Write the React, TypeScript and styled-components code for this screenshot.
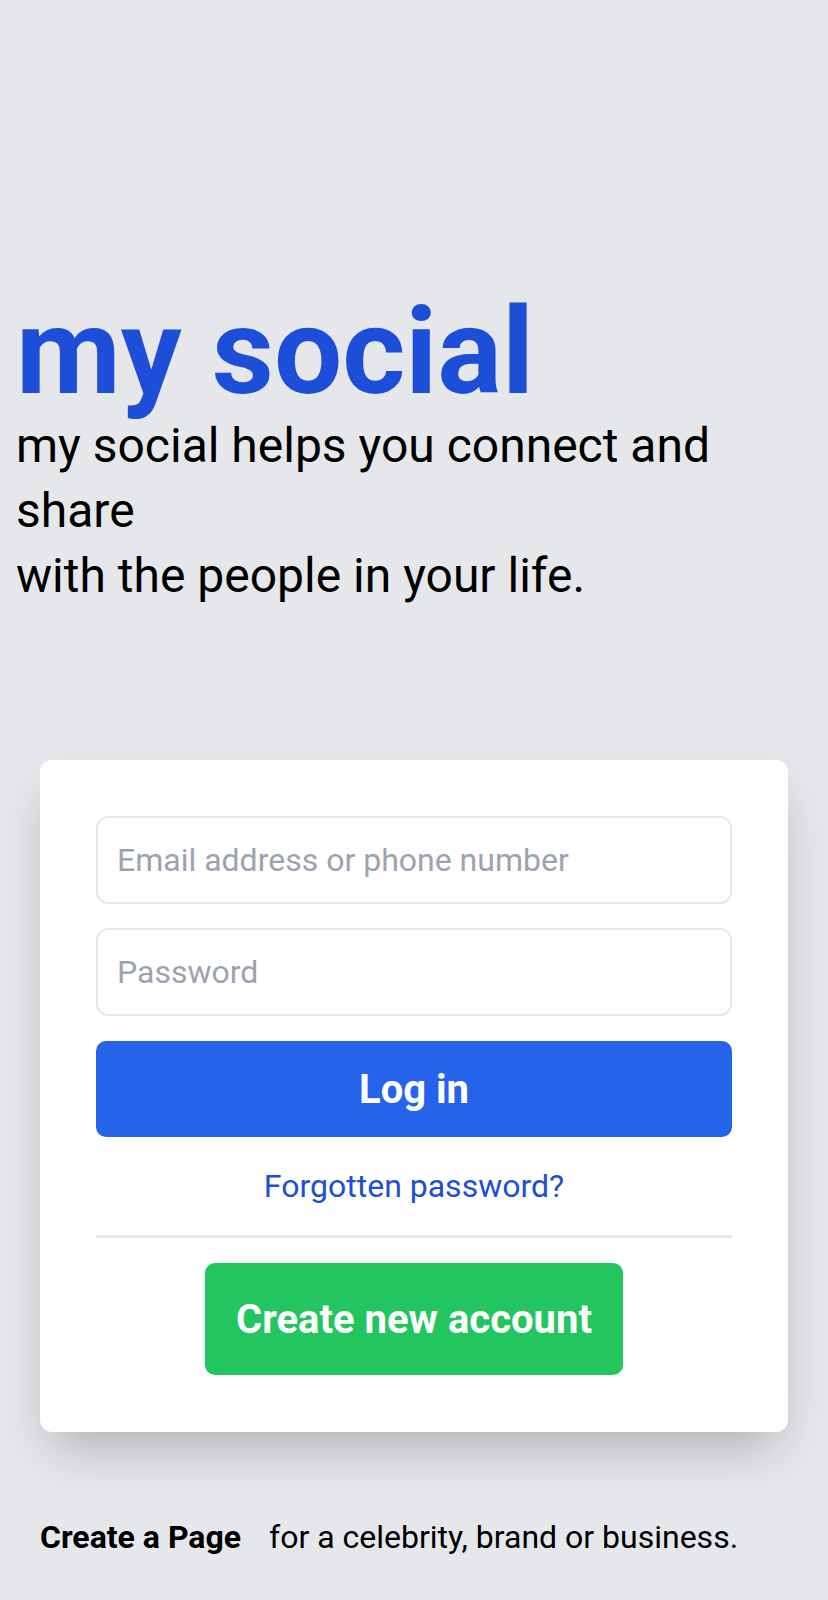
import styled, { createGlobalStyle } from "styled-components";

const GlobalStyle = createGlobalStyle`
  html, body {
    margin: 0;
    padding: 0;
    background: #e5e7eb;
    font-family: Roboto, "Liberation Sans", Arial, sans-serif;
  }
  * {
    box-sizing: border-box;
  }
`;

const Page = styled.main`
  min-height: 1600px;
  padding: 292px 0 0;
  display: flex;
  flex-direction: column;
`;

const Hero = styled.section`
  padding: 0 16px;
`;

const Brand = styled.h1`
  margin: 0;
  font-size: 121px;
  line-height: 1;
  font-weight: 700;
  color: #1d4ed8;
`;

const Tagline = styled.p`
  margin: 0;
  font-size: 48px;
  line-height: 65px;
  font-weight: 400;
  color: #000;
`;

const Card = styled.form`
  margin: 152px 40px 0;
  padding: 56px 56px 57px;
  background: #fff;
  border-radius: 12px;
  box-shadow: 0 25px 50px -12px rgba(0, 0, 0, 0.25);
  display: flex;
  flex-direction: column;
`;

const Field = styled.input`
  height: 88px;
  width: 100%;
  padding: 0 19px;
  border: 2px solid #e5e7eb;
  border-radius: 12px;
  font-family: inherit;
  font-size: 32px;
  color: #111827;
  outline: none;
  & + & {
    margin-top: 24px;
  }
  &::placeholder {
    color: #9ca3af;
  }
`;

const Button = styled.button<{ $variant: "primary" | "success" }>`
  border: none;
  border-radius: 10px;
  font-family: inherit;
  font-size: 40px;
  font-weight: 700;
  color: #fff;
  cursor: pointer;
  background: ${({ $variant }) =>
    $variant === "primary" ? "#2563eb" : "#22c55e"};
`;

const LoginButton = styled(Button)`
  margin-top: 25px;
  height: 96px;
  width: 100%;
`;

const CreateButton = styled(Button)`
  align-self: center;
  height: 112px;
  padding: 0 31px;
`;

const ForgotLink = styled.a`
  margin-top: 30px;
  align-self: center;
  font-size: 32px;
  line-height: 38px;
  color: #1d4ed8;
  text-decoration: none;
`;

const Divider = styled.hr`
  margin: 30px 0 25px;
  border: none;
  height: 3px;
  background: #e5e7eb;
`;

const Footer = styled.p`
  margin: 86px 40px 0;
  font-size: 32px;
  line-height: 38px;
  color: #000;
`;

const Strong = styled.a`
  font-weight: 700;
  color: #000;
  text-decoration: none;
  margin-right: 28px;
`;

export default function App() {
  return (
    <>
      <GlobalStyle />
      <Page>
        <Hero>
          <Brand>my social</Brand>
          <Tagline>
            my social helps you connect and share
            <br />
            with the people in your life.
          </Tagline>
        </Hero>

        <Card onSubmit={(e) => e.preventDefault()}>
          <Field type="text" placeholder="Email address or phone number" />
          <Field type="password" placeholder="Password" />
          <LoginButton $variant="primary" type="submit">
            Log in
          </LoginButton>
          <ForgotLink href="#">Forgotten password?</ForgotLink>
          <Divider />
          <CreateButton $variant="success" type="button">
            Create new account
          </CreateButton>
        </Card>

        <Footer>
          <Strong href="#">Create a Page</Strong>
          for a celebrity, brand or business.
        </Footer>
      </Page>
    </>
  );
}
